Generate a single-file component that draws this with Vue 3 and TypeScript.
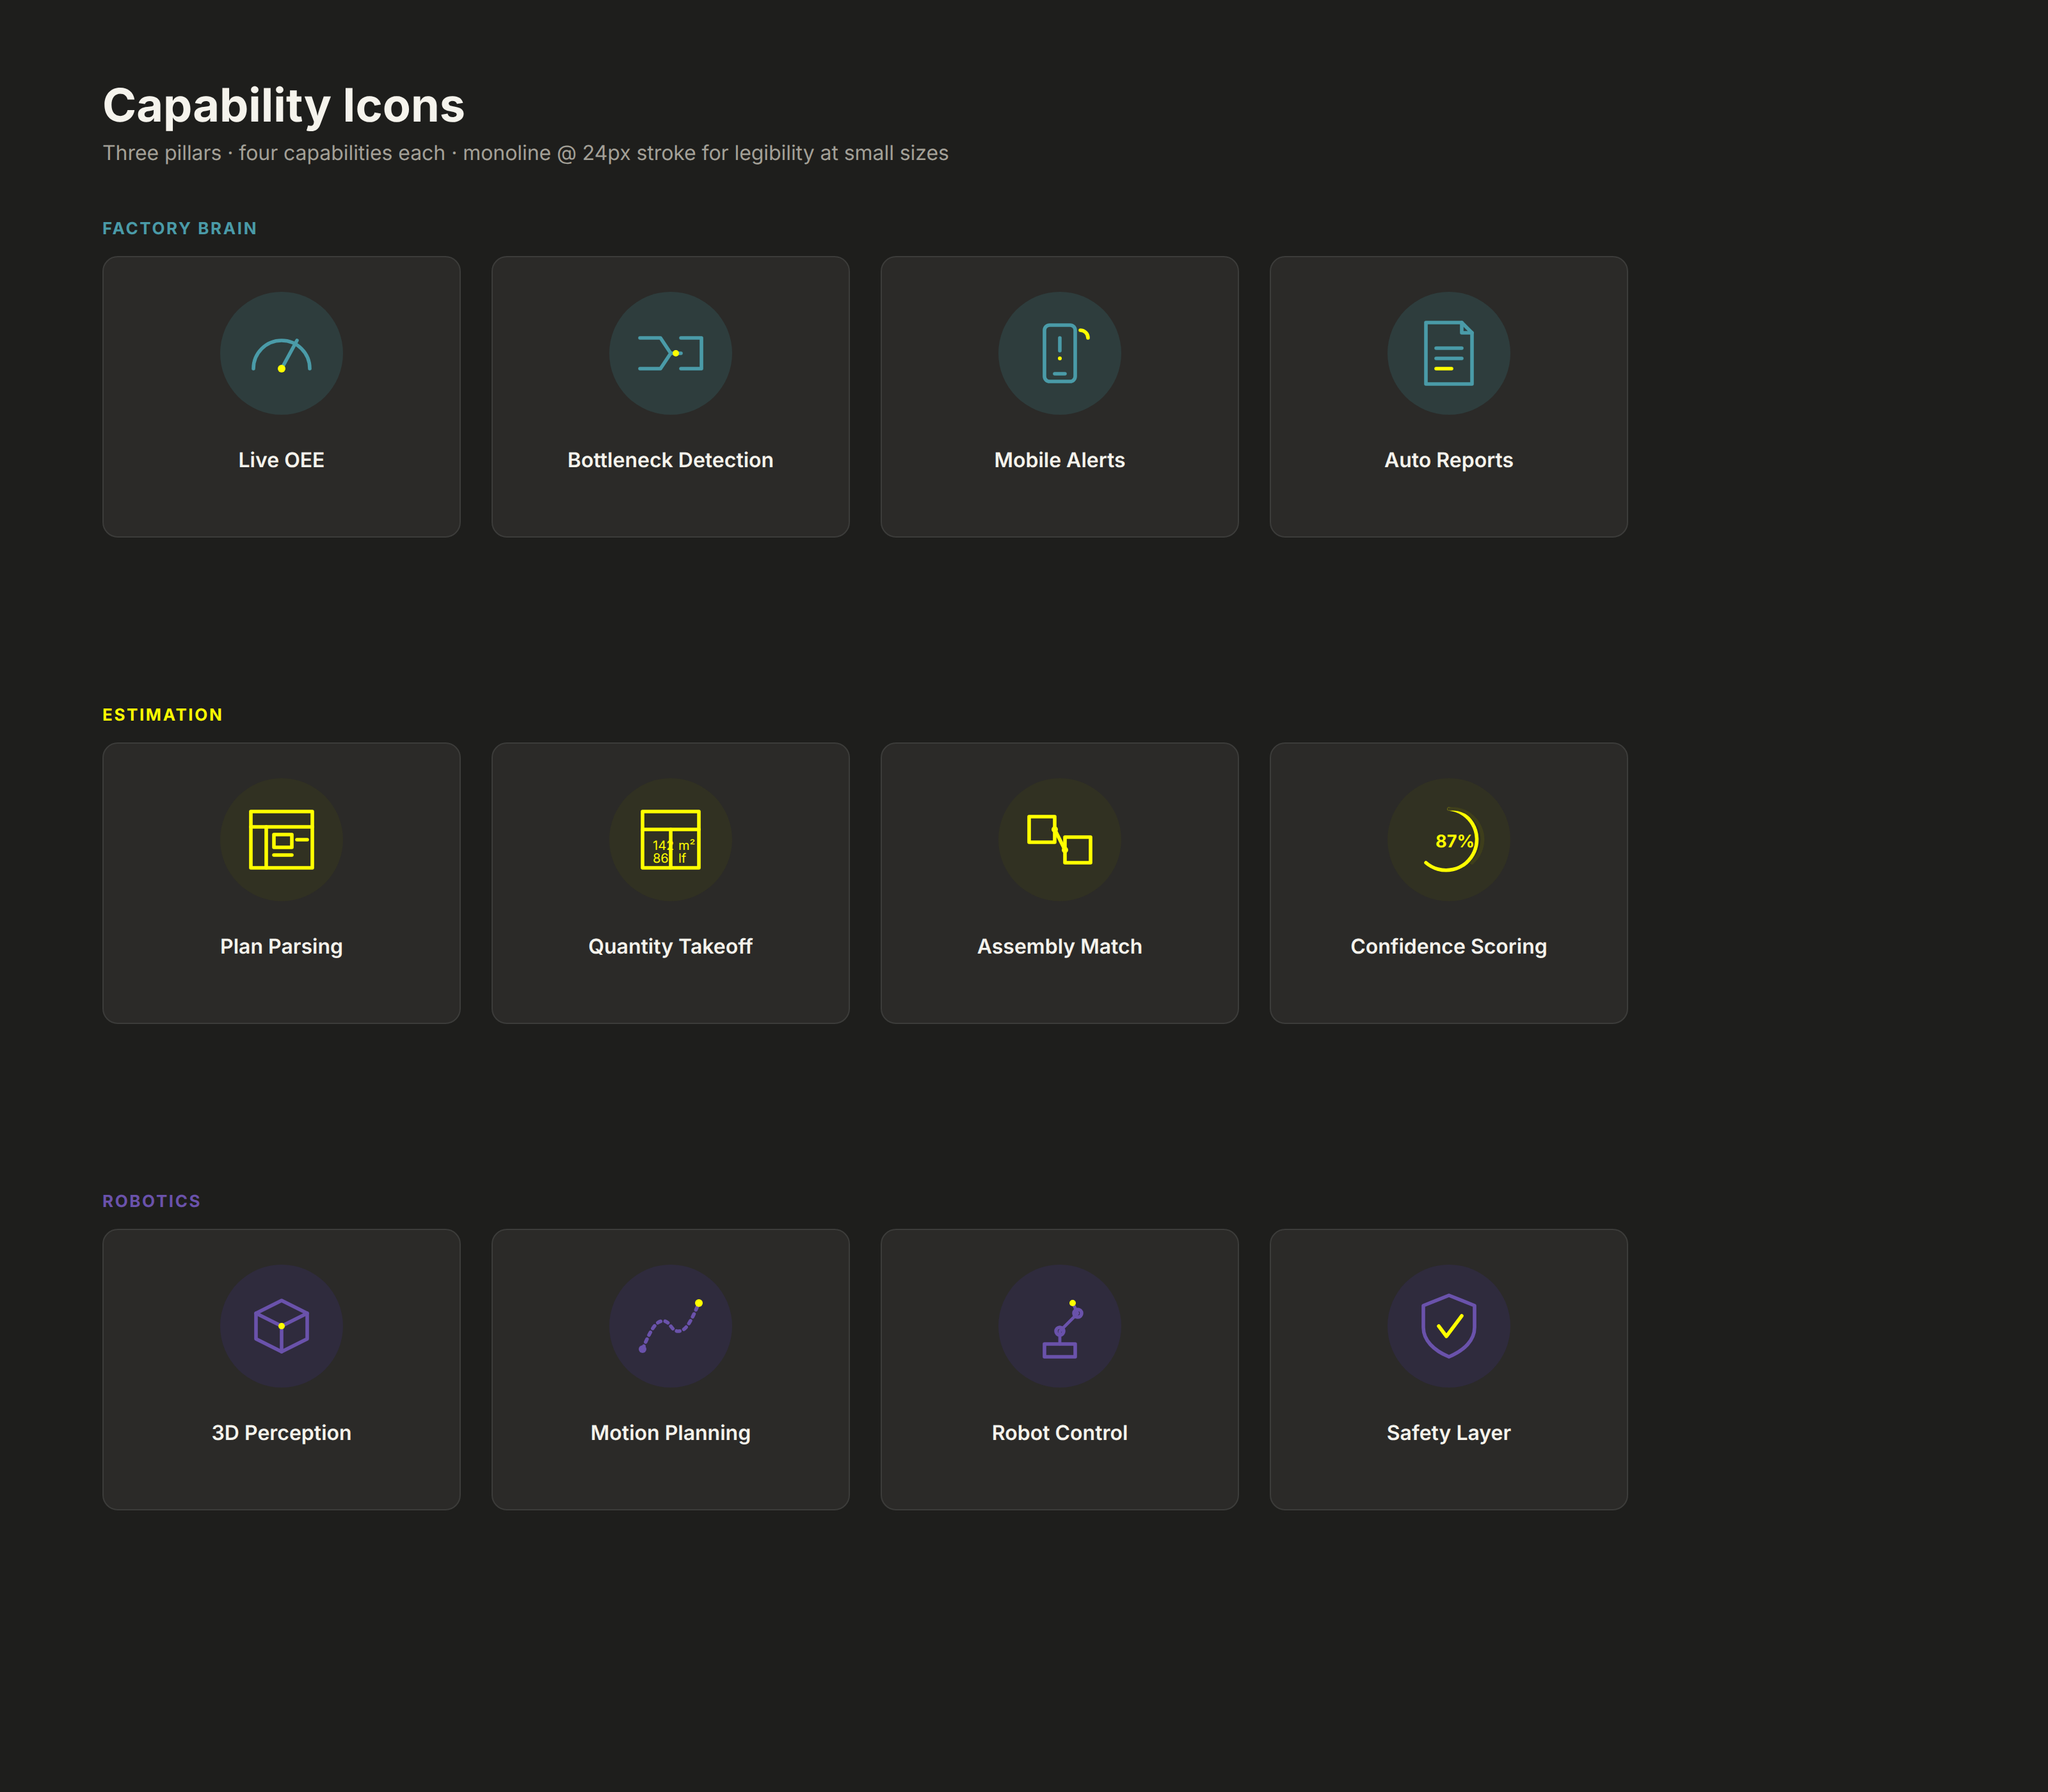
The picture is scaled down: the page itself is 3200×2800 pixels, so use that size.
<script setup lang="ts">
interface Capability {
  icon: string
  label: string
}

interface Pillar {
  name: string
  tone: string
  items: Capability[]
}

const pillars: Pillar[] = [
  {
    name: 'FACTORY BRAIN',
    tone: 'teal',
    items: [
      { icon: 'gauge', label: 'Live OEE' },
      { icon: 'bottleneck', label: 'Bottleneck Detection' },
      { icon: 'phone', label: 'Mobile Alerts' },
      { icon: 'report', label: 'Auto Reports' }
    ]
  },
  {
    name: 'ESTIMATION',
    tone: 'yellow',
    items: [
      { icon: 'plan', label: 'Plan Parsing' },
      { icon: 'takeoff', label: 'Quantity Takeoff' },
      { icon: 'assembly', label: 'Assembly Match' },
      { icon: 'score', label: 'Confidence Scoring' }
    ]
  },
  {
    name: 'ROBOTICS',
    tone: 'purple',
    items: [
      { icon: 'cube', label: '3D Perception' },
      { icon: 'motion', label: 'Motion Planning' },
      { icon: 'robot', label: 'Robot Control' },
      { icon: 'shield', label: 'Safety Layer' }
    ]
  }
]
</script>

<template>
  <main class="page">
    <h1 class="title">Capability Icons</h1>
    <p class="subtitle">Three pillars · four capabilities each · monoline @ 24px stroke for legibility at small sizes</p>

    <section v-for="pillar in pillars" :key="pillar.name" class="pillar" :class="pillar.tone">
      <h2 class="pillar-name">{{ pillar.name }}</h2>
      <div class="grid">
        <article v-for="item in pillar.items" :key="item.icon" class="card">
          <div class="badge">
            <svg class="icon" viewBox="0 0 24 24" width="96" height="96">
              <template v-if="item.icon === 'gauge'">
                <path d="M1 18a11 11 0 0 1 22 0" />
                <path d="M12 18l6-11" />
                <circle class="dot" cx="12" cy="18" r="1.5" />
              </template>
              <template v-else-if="item.icon === 'bottleneck'">
                <path d="M0 6h8l4 6-4 6H0" />
                <path d="M16 6h8v12h-8" />
                <path d="M12 12h4" />
                <circle class="dot" cx="14" cy="12" r="1.25" />
              </template>
              <template v-else-if="item.icon === 'phone'">
                <rect x="6" y="1" width="12" height="22" rx="2" />
                <path d="M12 6v5" />
                <path d="M10 20h4" />
                <circle class="dot" cx="12" cy="14" r="0.75" />
                <path class="accent" d="M20 3a3 3 0 0 1 3 3" />
              </template>
              <template v-else-if="item.icon === 'report'">
                <path d="M3 0h14l4 4v20H3z" />
                <path d="M17 0v4h4" />
                <path d="M7 10h10" />
                <path d="M7 14h10" />
                <path class="accent" d="M7 18h6" />
              </template>
              <template v-else-if="item.icon === 'plan'">
                <rect x="0" y="1" width="24" height="22" />
                <path d="M0 7h24" />
                <path d="M6 7v16" />
                <rect x="9" y="10" width="7" height="5" />
                <path d="M18 12h4" />
                <path d="M9 18h7" />
              </template>
              <template v-else-if="item.icon === 'takeoff'">
                <rect x="1" y="1" width="22" height="22" />
                <text class="cell" x="5" y="16">142</text>
                <text class="cell" x="5" y="21">86</text>
                <text class="cell" x="15" y="16">m²</text>
                <text class="cell" x="15" y="21">lf</text>
                <path d="M1 8h22" />
                <path d="M12 8v15" />
              </template>
              <template v-else-if="item.icon === 'assembly'">
                <rect x="0" y="3" width="10" height="10" />
                <rect x="14" y="11" width="10" height="10" />
                <path d="M10 8l4 8" />
                <circle class="dot" cx="10" cy="8" r="1.25" />
                <circle class="dot" cx="14" cy="16" r="1.25" />
              </template>
              <template v-else-if="item.icon === 'score'">
                <path d="M12 0A12 12 0 1 1 3 21" />
                <path class="track" d="M12 0A12 12 0 0 1 21 21" />
                <text class="percent" x="14.4" y="15">87%</text>
              </template>
              <template v-else-if="item.icon === 'cube'">
                <path d="M12 2l10 5v10l-10 5-10-5V7z" />
                <path d="M2 7l10 5 10-5" />
                <path d="M12 12v10" />
                <circle class="dot" cx="12" cy="12" r="1.25" />
              </template>
              <template v-else-if="item.icon === 'motion'">
                <path class="dashed" d="M1 21C4 14 6 10 9 10S12 14 15 14 20 10 23 3" />
                <circle class="solid" cx="1" cy="21" r="1.5" />
                <circle class="dot" cx="23" cy="3" r="1.5" />
              </template>
              <template v-else-if="item.icon === 'robot'">
                <rect x="6" y="19" width="12" height="5" />
                <path class="thin" d="M12 19v-5l7-7-2-4" />
                <circle cx="12" cy="14" r="1.5" />
                <circle cx="19" cy="7" r="1.5" />
                <circle class="dot" cx="17" cy="3" r="1.25" />
              </template>
              <template v-else-if="item.icon === 'shield'">
                <path d="M12 0l10 4v8.500c0 5-4 9-10 11.500-6-2.500-10-6.500-10-11.500V4z" />
                <path class="accent" d="M8 12l3 4 6-8" />
              </template>
            </svg>
          </div>
          <h3 class="card-label">{{ item.label }}</h3>
        </article>
      </div>
    </section>
  </main>
</template>

<style>
html,
body {
  margin: 0;
  background: #1e1e1c;
}
</style>

<style scoped>
.page {
  box-sizing: border-box;
  min-height: 2800px;
  padding: 120px 160px 0;
  background: #1e1e1c;
  font-family: Inter, "Liberation Sans", sans-serif;
  text-rendering: geometricPrecision;
}

.title {
  margin: 0;
  font-size: 72px;
  line-height: 90px;
  font-weight: 700;
  color: #f5f3ec;
}

.subtitle {
  margin: 9px 0 0;
  font-size: 32px;
  line-height: 40px;
  font-weight: 400;
  letter-spacing: -0.064px;
  color: #a3a097;
}

.pillar {
  margin-bottom: 262px;
}

.pillar:first-of-type {
  margin-top: 83px;
}

.pillar:last-child {
  margin-bottom: 0;
}

.pillar-name {
  margin: 0 0 26px;
  font-size: 26px;
  line-height: 32px;
  font-weight: 700;
  letter-spacing: 2.6px;
}

.teal {
  color: #4a9ba8;
}

.yellow {
  color: #ffff00;
}

.purple {
  color: #6a52ab;
}

.grid {
  display: grid;
  grid-template-columns: repeat(4, 560px);
  gap: 48px;
}

.card {
  box-sizing: border-box;
  height: 440px;
  padding-top: 54px;
  display: flex;
  flex-direction: column;
  align-items: center;
  background: #2b2a28;
  border: 2px solid #3c3c3a;
  border-radius: 24px;
}

.badge {
  width: 192px;
  height: 192px;
  display: flex;
  align-items: center;
  justify-content: center;
  border-radius: 50%;
}

.teal .badge {
  background: #2e3d3d;
}

.yellow .badge {
  background: #313122;
}

.purple .badge {
  background: #2f2b3d;
}

.icon {
  overflow: visible;
  fill: none;
  stroke: currentColor;
  stroke-width: 1.4;
  stroke-linecap: round;
  stroke-linejoin: round;
}

.accent {
  stroke: #ffff00;
}

.dot {
  fill: #ffff00;
  stroke: none;
}

.solid {
  fill: currentColor;
  stroke: none;
}

.track {
  stroke: #3e3e1b;
}

.dashed {
  stroke-dasharray: 1.25 1.75;
}

.thin {
  stroke-width: 1.2;
}

.cell {
  fill: #ffff00;
  stroke: none;
  font-size: 5px;
  font-weight: 400;
}

.percent {
  fill: #ffff00;
  stroke: none;
  font-size: 6.8px;
  font-weight: 700;
  text-anchor: middle;
}

.card-label {
  margin: 51px 0 0;
  font-size: 32px;
  line-height: 40px;
  font-weight: 600;
  color: #f5f3ec;
}
</style>
